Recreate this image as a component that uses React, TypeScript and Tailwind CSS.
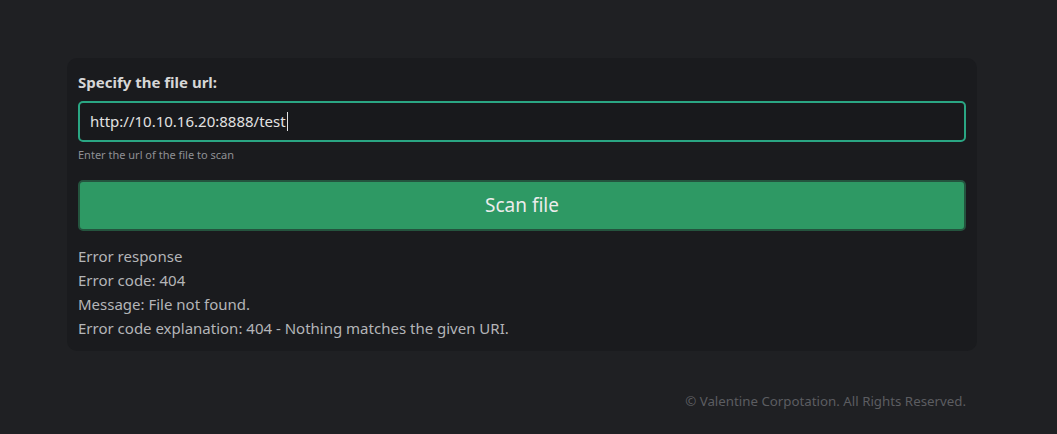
export default function App() {
  return (
    <div
      className="min-h-[434px] w-full bg-[#1f2023] flex flex-col"
      style={{ fontFamily: "'Noto Sans', 'Open Sans', sans-serif" }}
    >
      <div className="ml-[67px] mt-[58px] w-[910px] rounded-[10px] bg-[#1a1b1e] px-[11px] pt-[12px] pb-[11px]">
        <label className="block text-[15px] font-bold leading-[24px] text-[#d6d6d6]">
          Specify the file url:
        </label>
        <div className="mt-[7px] flex h-[41px] items-center rounded-[5px] border-2 border-[#2aa683] bg-[#18191c] px-[10px]">
          <span className="text-[15px] text-[#e2e2e2]">http://10.10.16.20:8888/test</span>
          <span className="ml-[1px] h-[19px] w-[1px] bg-[#e2e2e2]" />
        </div>
        <p className="mt-[5px] text-[11px] leading-[16px] text-[#8f9094]">
          Enter the url of the file to scan
        </p>
        <button className="mt-[17px] flex h-[51px] w-full items-center justify-center rounded-[5px] border-2 border-[#24543e] bg-[#2e9964] text-[19px] text-[#ececec]">
          Scan file
        </button>
        <div className="mt-[13px] text-[15px] leading-[24px] text-[#b4b5b8]">
          <div>Error response</div>
          <div>Error code: 404</div>
          <div>Message: File not found.</div>
          <div>Error code explanation: 404 - Nothing matches the given URI.</div>
        </div>
      </div>
      <div className="ml-[67px] mt-[41px] flex w-[910px] justify-end pr-[11px]">
        <p className="text-[13.3px] text-[#5c5d61]">© Valentine Corpotation. All Rights Reserved.</p>
      </div>
    </div>
  );
}
